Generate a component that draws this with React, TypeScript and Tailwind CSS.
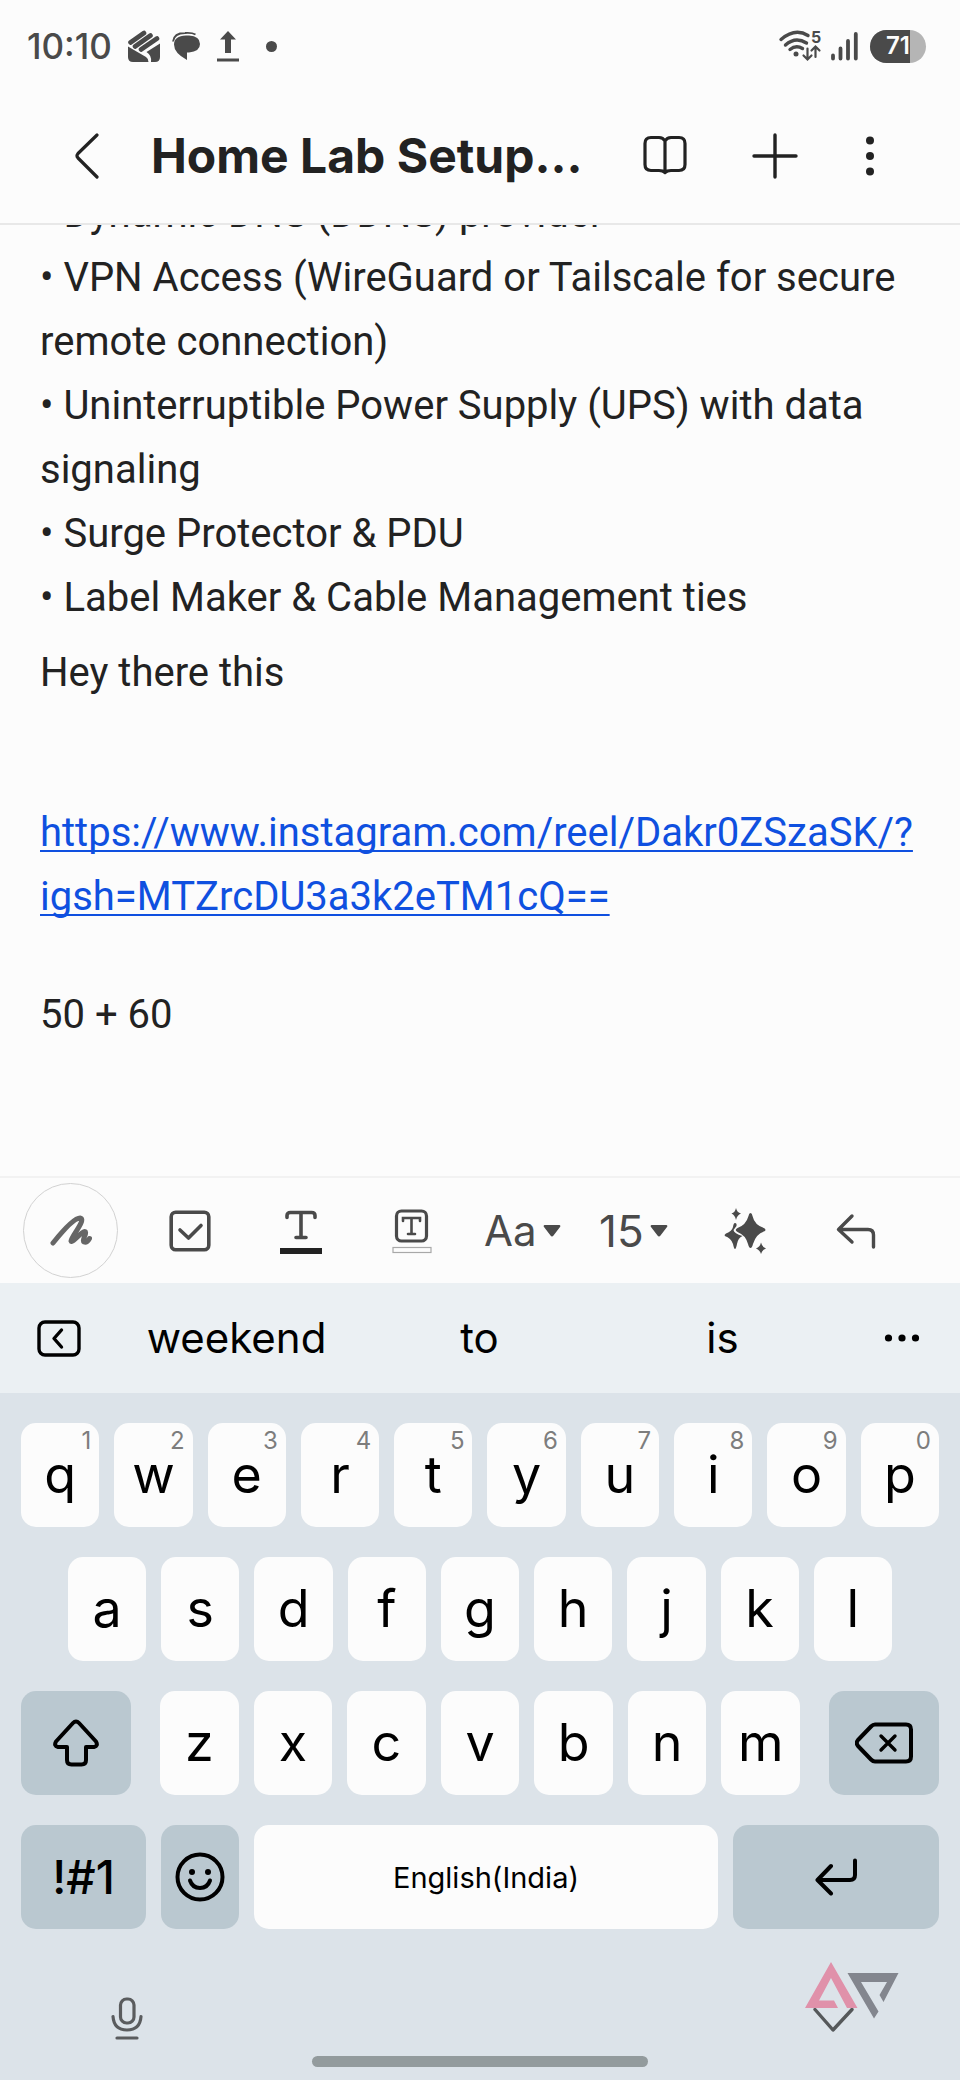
import React from 'react';

const topRow = ['q', 'w', 'e', 'r', 't', 'y', 'u', 'i', 'o', 'p'];
const homeRow = ['a', 's', 'd', 'f', 'g', 'h', 'j', 'k', 'l'];
const bottomRow = ['z', 'x', 'c', 'v', 'b', 'n', 'm'];
const suggestions = ['weekend', 'to', 'is'];

const Key = ({ letter, hint }: { letter: string; hint?: string }) => (
    <button className="relative flex h-[104px] min-w-0 flex-1 items-center justify-center rounded-[15px] bg-[#fcfcfc] text-[52px] leading-none text-black">
        {letter}
        {hint && (
            <span className="absolute right-2 top-2 text-2xl leading-5 text-[#7d7d7d]">{hint}</span>
        )}
    </button>
);

const StatusBar = () => (
    <div className="flex h-[92px] items-center px-[27px] text-[#4a4a4a]">
        <span className="text-[35px] font-medium leading-none">10:10</span>
        <svg className="ml-4 h-8 w-8" viewBox="0 0 32 32" fill="currentColor">
            <path d="M0 16.500L18 27Q20.800 29 20.500 32H5Q0 32 0 27Z" />
            <path d="M18.500 22L32 13.500V27Q32 32 27 32H23Q24 25.500 18.500 22Z" />
            <path d="M2.500 12.500L16 3M7 16.500L22.500 5.500M13 19.500L29 8.500" stroke="currentColor" strokeWidth="4.600" strokeLinecap="round" />
        </svg>
        <svg className="ml-3 h-7 w-7" viewBox="0 0 28 28" fill="currentColor">
            <path d="M14 3.500H17Q28 4 28 12Q28 19.500 17 20.500H15V28Q2 21 2 12.500Q2 4 14 3.500Z" />
            <path d="M1 9.500Q2 1 13 1Q20 .5 23.500 2.500" fill="none" stroke="currentColor" strokeWidth="1.800" />
        </svg>
        <svg className="ml-4 h-[31px] w-6" viewBox="0 0 24 31" fill="currentColor">
            <path d="M12 0L20 8.500H15V22H9V8.500H4ZM1 27.500H23V30.500H1Z" />
        </svg>
        <span className="ml-[26px] h-[11px] w-[11px] rounded-full bg-[#4a4a4a]" />

        <svg className="ml-auto h-8 w-[43px] overflow-visible" viewBox="0 0 43 32" fill="none" stroke="currentColor" strokeWidth="3.400" strokeLinecap="round">
            <path d="M2 9.500Q16-2.500 29 5.500" />
            <path d="M6.500 15Q16.500 6 27.500 13" />
            <path d="M11 19.500Q17 14.500 23.500 18.500" />
            <circle cx="17" cy="24" r="2.500" fill="currentColor" stroke="none" />
            <path d="M28.500 18.500V29M24.500 25.500L28.500 29.500L32.500 25.500M36.500 27V17M32.500 20.500L36.500 16.500L40.500 20.500" strokeWidth="2.200" />
            <text x="32" y="13" className="text-[16px] font-bold" fill="currentColor" stroke="none">5</text>
        </svg>
        <svg className="ml-2 h-[30px] w-7" viewBox="0 0 28 30" stroke="currentColor" strokeWidth="3.800" strokeLinecap="round">
            <path d="M3 24.500V27.500M10.500 17.500V27.500M18 10V27.500M25.800 3V27.500" />
        </svg>
        <div className="relative ml-3 mr-[7px] flex h-[33px] w-14 items-center justify-center overflow-hidden rounded-full bg-[#b5b5b5]">
            <span className="absolute inset-y-0 left-0 w-[40px] bg-[#4a4a4a]" />
            <span className="relative text-2xl font-semibold leading-none text-[#fcfcfc]">71</span>
        </div>
    </div>
);

const Header = () => (
    <header className="flex h-[133px] items-center border-b-2 border-[#e8e8e8] pb-5 pl-[65px] pr-[78px] pt-4 text-[#222222]">
        <button aria-label="Back" className="flex w-11 justify-center">
            <svg className="h-[46px] w-6" viewBox="0 0 24 46" fill="none" stroke="currentColor" strokeWidth="3.200" strokeLinecap="round" strokeLinejoin="round">
                <path d="M22 2L3 20.500Q1 22.800 3 25L22 44" />
            </svg>
        </button>
        <h1 className="ml-[42px] min-w-0 flex-1 whitespace-nowrap text-5xl font-bold">Home Lab Setup...</h1>
        <button aria-label="Reading mode">
            <svg className="h-[46px] w-11" viewBox="0 0 44 46" fill="none" stroke="currentColor" strokeWidth="3.200" strokeLinejoin="round">
                <path d="M22 8Q20 4.500 16 4.500H8Q2 4.500 2 10.500V31.500Q2 37.500 8 37.500H16Q20 37.500 22 39.500Q24 37.500 28 37.500H36Q42 37.500 42 31.500V10.500Q42 4.500 36 4.500H28Q24 4.500 22 8V39.500" />
            </svg>
        </button>
        <button aria-label="Add" className="ml-[65px]">
            <svg className="h-[46px] w-[46px]" viewBox="0 0 46 46" fill="none" stroke="currentColor" strokeWidth="3.400" strokeLinecap="round">
                <path d="M23 2V44M2 23H44" />
            </svg>
        </button>
        <button aria-label="More options" className="ml-[60px]">
            <svg className="h-[46px] w-6" viewBox="0 0 24 46" fill="currentColor">
                <circle cx="12" cy="7.500" r="4" />
                <circle cx="12" cy="23" r="4" />
                <circle cx="12" cy="38.500" r="4" />
            </svg>
        </button>
    </header>
);

const Note = () => (
    <main className="flex min-h-0 flex-1 flex-col justify-end overflow-hidden px-10 pb-[129px] font-[Roboto,sans-serif] text-[40px] leading-[64px] text-[#222222]">
        <p>• Dynamic DNS (DDNS) provider</p>
        <p>• VPN Access (WireGuard or Tailscale for secure remote connection)</p>
        <p>• Uninterruptible Power Supply (UPS) with data signaling</p>
        <p>• Surge Protector &amp; PDU</p>
        <p>• Label Maker &amp; Cable Management ties</p>
        <p className="mt-[11px]">Hey there this</p>
        <p className="mt-24 text-[#0f50e0]">
            <a
                href="https://www.instagram.com/reel/Dakr0ZSzaSK/?igsh=MTZrcDU3a3k2eTM1cQ=="
                className="underline decoration-2 underline-offset-4 [text-decoration-skip-ink:none]"
            >
                https://www.instagram.com/reel/Dakr0ZSzaSK/?<wbr />igsh=MTZrcDU3a3k2eTM1cQ==
            </a>
        </p>
        <p className="mt-[54px]">50 + 60</p>
    </main>
);

const Caret = () => (
    <svg className="pointer-events-none h-3 w-[18px]" viewBox="0 0 18 12" fill="currentColor">
        <path d="M1.500 0H16.500Q18 .5 17 2L10.500 10.500Q9 12.500 7.500 10.500L1 2Q0 .5 1.500 0Z" />
    </svg>
);

const Toolbar = () => (
    <div className="flex h-[107px] items-center border-t-2 border-[#f2f2f2] pl-[23px] pr-[49px] text-[#4a4a4a]">
        <button aria-label="Handwriting" className="flex h-[95px] w-[95px] items-center justify-center rounded-full border border-[#d2d2d2]">
            <svg className="h-8 w-[42px]" viewBox="0 0 42 32" fill="none" stroke="#666666" strokeWidth="5" strokeLinecap="round" strokeLinejoin="round">
                <path d="M3 28C11 18 24 3 30 3C37 4 21 22 21 26C22 29 33 15 35 16.500C38 18 31 25 34 27Q37 28 39.500 23.500" />
            </svg>
        </button>
        <div className="ml-4 grid flex-1 grid-cols-7 place-items-center">
            <button aria-label="Checklist">
                <svg className="h-[46px] w-[42px]" viewBox="0 0 42 46" fill="none" stroke="currentColor" strokeWidth="3.600" strokeLinecap="round" strokeLinejoin="round">
                    <rect x="2.200" y="4.200" width="37.600" height="37.600" rx="4.500" />
                    <path d="M11 22L19.500 30L32 17.500" />
                </svg>
            </button>
            <button aria-label="Text color">
                <svg className="h-[46px] w-11" viewBox="0 0 44 46" fill="none" stroke="currentColor" strokeWidth="3.600" strokeLinecap="round">
                    <path d="M8 9.500V7.500Q8 4.500 11.500 4.500H32.500Q36 4.500 36 7.500V9.500M22 4.500V29.500M17 29.500H27" />
                    <path d="M1 43H43" stroke="#222222" strokeWidth="6" strokeLinecap="butt" />
                </svg>
            </button>
            <button aria-label="Highlight color">
                <svg className="h-[46px] w-10" viewBox="0 0 40 46" fill="none" stroke="currentColor" strokeWidth="3.200" strokeLinecap="round">
                    <rect x="4.500" y="3" width="30" height="30" rx="5" />
                    <path d="M11 13V10H28V13M19.500 10V26M16 26H23" strokeWidth="2.600" />
                    <rect x="1" y="39.500" width="38" height="5" stroke="#a8a8a8" strokeWidth="1.200" />
                </svg>
            </button>
            <label className="flex items-center gap-1.5">
                <select aria-label="Text style" className="appearance-none text-[42px] leading-none">
                    <option>Aa</option>
                </select>
                <Caret />
            </label>
            <label className="flex items-center gap-1.5">
                <select aria-label="Font size" className="appearance-none text-[44px] leading-none">
                    <option>15</option>
                </select>
                <Caret />
            </label>
            <button aria-label="Note assist">
                <svg className="h-[46px] w-[42px]" viewBox="0 0 42 46" fill="currentColor">
                    <path d="M26.500 5Q28 5 28.500 8Q30.500 17 40 20Q43 22 40 23.500Q32 26 29 36Q28 40 26.500 40Q25 40 24 36Q21.500 27 13.500 24Q10 22 13.500 20Q22 17 24.500 8Q25 5 26.500 5Z" />
                    <path d="M11 15Q13 15 12.500 18L9.500 22Q10 25.500 18.500 28Q14 30 13 36Q12 41 11 41Q10 41 9 36Q7 30 .8 28Q0 26.500 2 25.500Q8 23 9 19Q9.500 15 11 15Z" />
                    <path d="M12 0Q13 4.500 17 5.500Q13 7 12 12Q11 7 7.500 5.500Q11 4.500 12 0ZM37 34.500Q38 39 42 40.500Q38 42 37 46Q36 42 32 40.500Q36 39 37 34.500Z" />
                </svg>
            </button>
            <button aria-label="Undo">
                <svg className="h-[46px] w-10" viewBox="0 0 40 46" fill="none" stroke="currentColor" strokeWidth="3.400" strokeLinecap="round" strokeLinejoin="round">
                    <path d="M16 8L2.500 21.500L16 34M3 21.500H32Q37.500 21.500 37.500 27V39" />
                </svg>
            </button>
        </div>
    </div>
);

const Suggestions = () => (
    <div className="flex h-[110px] items-center bg-[#ebf0f3] pl-[37px] pr-10 text-black">
        <button aria-label="Collapse">
            <svg className="h-[37px] w-11" viewBox="0 0 44 37" fill="none" stroke="currentColor" strokeWidth="3.400" strokeLinecap="round" strokeLinejoin="round">
                <rect x="2" y="2" width="40" height="33" rx="6" />
                <path d="M24.500 10L17 18.500L24.500 27" />
            </svg>
        </button>
        <div className="ml-[34px] grid flex-1 grid-cols-3 text-[42px] leading-none">
            {suggestions.map((word) => (
                <button key={word}>{word}</button>
            ))}
        </div>
        <button aria-label="More suggestions" className="ml-10">
            <svg className="h-2 w-9" viewBox="0 0 36 8" fill="currentColor">
                <circle cx="4.500" cy="4" r="3.600" />
                <circle cx="18" cy="4" r="3.600" />
                <circle cx="31.500" cy="4" r="3.600" />
            </svg>
        </button>
    </div>
);

const Keyboard = () => (
    <div className="bg-[#dce3e9] pt-[30px] text-black">
        <div className="flex flex-col gap-[30px] px-[21px]">
            <div className="flex gap-[15px]">
                {topRow.map((letter, i) => (
                    <Key key={letter} letter={letter} hint={String((i + 1) % 10)} />
                ))}
            </div>
            <div className="flex gap-[15px] px-[47px]">
                {homeRow.map((letter) => (
                    <Key key={letter} letter={letter} />
                ))}
            </div>
            <div className="flex gap-[29px]">
                <button aria-label="Shift" className="flex h-[104px] w-[110px] items-center justify-center rounded-[15px] bg-[#bac8d0]">
                    <svg className="h-12 w-[46px]" viewBox="0 0 46 48" fill="none" stroke="currentColor" strokeWidth="4" strokeLinejoin="round">
                        <path d="M20 4Q23 .8 26 4L43 22.500Q45.500 27 41 28H33V41Q33 45.500 28.500 45.500H18.500Q14 45.500 14 41V28H5Q.5 27 3 22.500Z" />
                    </svg>
                </button>
                <div className="flex flex-1 gap-[15px]">
                    {bottomRow.map((letter) => (
                        <Key key={letter} letter={letter} />
                    ))}
                </div>
                <button aria-label="Backspace" className="flex h-[104px] w-[110px] items-center justify-center rounded-[15px] bg-[#bac8d0]">
                    <svg className="h-[42px] w-[58px]" viewBox="0 0 58 42" fill="none" stroke="currentColor" strokeWidth="4" strokeLinecap="round" strokeLinejoin="round">
                        <path d="M20 2.500H51Q56 2.500 56 7.500V34.500Q56 39.500 51 39.500H20Q18 39.500 16 37.500L3 24Q.5 21 3 18L16 4.500Q18 2.500 20 2.500Z" />
                        <path d="M26 14L40 28M40 14L26 28" strokeWidth="3.400" />
                    </svg>
                </button>
            </div>
            <div className="flex gap-[15px]">
                <button className="flex h-[104px] w-[125px] items-center justify-center rounded-[15px] bg-[#bac8d0] text-[46px] font-medium leading-none">
                    !#1
                </button>
                <button aria-label="Emoji" className="flex h-[104px] w-[78px] items-center justify-center rounded-[15px] bg-[#bac8d0]">
                    <svg className="h-[50px] w-[50px]" viewBox="0 0 50 50" fill="none" stroke="currentColor" strokeWidth="4" strokeLinecap="round">
                        <circle cx="25" cy="25" r="22.500" />
                        <path d="M15 28.500Q17.500 36 25 36Q32.500 36 35 28.500" />
                        <circle cx="17" cy="20" r="3" fill="currentColor" stroke="none" />
                        <circle cx="33" cy="20" r="3" fill="currentColor" stroke="none" />
                    </svg>
                </button>
                <button className="h-[104px] min-w-0 flex-1 rounded-[15px] bg-[#fcfcfc] text-[29px] leading-none">English(India)</button>
                <button aria-label="Enter" className="flex h-[104px] w-[206px] items-center justify-center rounded-[15px] bg-[#bac8d0]">
                    <svg className="h-[38px] w-[42px]" viewBox="0 0 42 38" fill="none" stroke="currentColor" strokeWidth="4" strokeLinecap="round" strokeLinejoin="round">
                        <path d="M16 8L2.500 22L16 35.500M3 22H35Q40 22 40 17V2.500" />
                    </svg>
                </button>
            </div>
        </div>
        <div className="flex items-start justify-between pl-[111px] pr-[61px] pt-8">
            <button aria-label="Voice input" className="mt-9">
                <svg className="h-[44px] w-8" viewBox="0 0 32 44" fill="none" stroke="#5a5c5e" strokeWidth="3.200" strokeLinecap="round">
                    <rect x="9.500" y="2" width="13.500" height="24" rx="6" />
                    <path d="M2 19.500Q3 33 16 33Q29 33 30 19.500M6 41H26" />
                </svg>
            </button>
            <button aria-label="Hide keyboard">
                <svg className="h-[71px] w-[94px]" viewBox="0 0 94 71" fill="none">
                    <path d="M10 48.500L28 69L47 48.500" stroke="#55585a" strokeWidth="3.400" strokeLinecap="round" strokeLinejoin="round" />
                    <path d="M26 1L52.500 47H42L26 17L14 39.500H29L33 47H0Z" fill="#e091aa" />
                    <path d="M42.500 12H93.500L78.500 41L74.500 34L82 21H56L73.500 50.500L69 57.500Z" fill="#83868e" />
                </svg>
            </button>
        </div>
        <div className="mx-auto mb-[13px] mt-[15px] h-[11px] w-[35%] rounded-full bg-[#939b9d]" />
    </div>
);

export default function App() {
    return (
        <div className="flex h-screen flex-col bg-[#fcfcfc] font-[Inter,sans-serif]">
            <StatusBar />
            <Header />
            <Note />
            <Toolbar />
            <Suggestions />
            <Keyboard />
        </div>
    );
}
